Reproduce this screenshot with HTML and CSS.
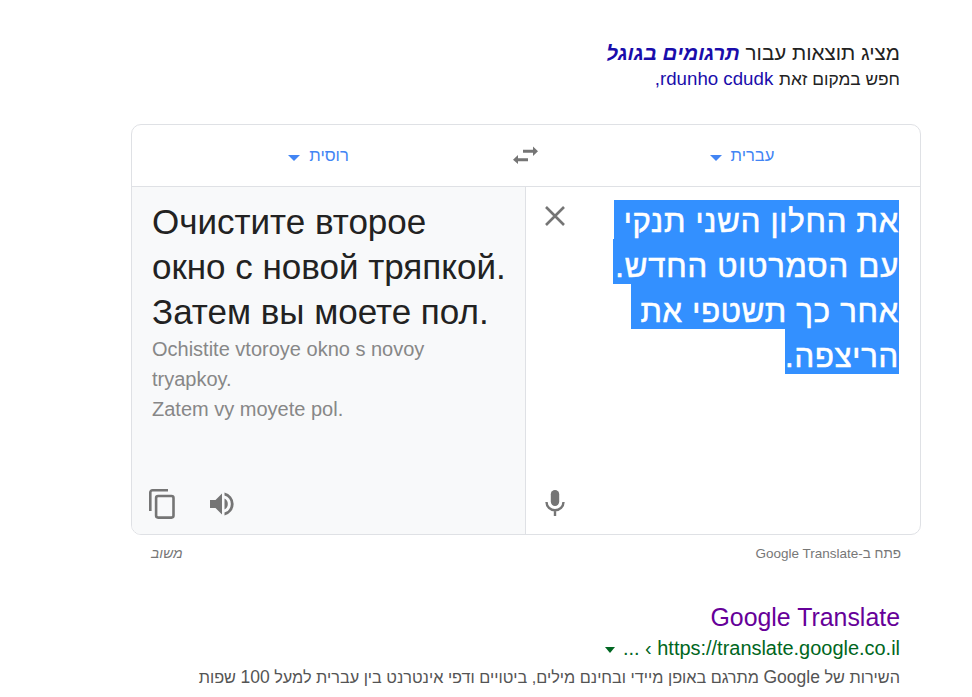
FILE: index.html
```html
<!DOCTYPE html>
<html lang="he" dir="rtl">
<head>
  <meta charset="UTF-8" />
  <meta name="viewport" content="width=device-width, initial-scale=1.0" />
  <title>תרגומים בגוגל</title>
  <link rel="stylesheet" href="styles.css">
</head>
<body>
  <div class="spelling">
    <div class="showing">מציג תוצאות עבור <a href="#" class="fixed">תרגומים בגוגל</a></div>
    <div class="instead">חפש במקום זאת <a href="#">rdunho cdudk,</a></div>
  </div>

  <div class="translator">
    <div class="languages">
      <a href="#" class="lang">עברית <span class="caret"></span></a>
      <svg class="swap" viewBox="0 0 25 18">
        <path d="M10 3.800h10V.500L25 5.300l-5 4.800V6.800H10z M15 12.200H5V8.900L0 13.700l5 4.300V15.200H15z" />
      </svg>
      <a href="#" class="lang">רוסית <span class="caret"></span></a>
    </div>
    <div class="panels">
      <div class="panel source">
        <svg class="clear" viewBox="0 0 20 20"><path d="M1 1L19 19M19 1L1 19" /></svg>
        <div class="source-text">
          <div class="line first">את החלון השני תנקי </div>
          <div class="line second">עם הסמרטוט החדש.</div>
          <div class="line">אחר כך תשטפי את </div>
          <div class="line">הריצפה.</div>
        </div>
        <svg class="mic" viewBox="0 0 20 26">
          <rect x="5.800" y="0" width="8.400" height="16" rx="4.200" />
          <path d="M1.500 12a8.500 8.300 0 0 0 17 0M10 20v6" />
        </svg>
      </div>
      <div class="panel target" dir="ltr">
        <div class="translation">Очистите второе<br>окно с новой тряпкой.<br>Затем вы моете пол.</div>
        <div class="translit">Ochistite vtoroye okno s novoy<br>tryapkoy.<br>Zatem vy moyete pol.</div>
        <div class="tools">
          <svg class="copy" viewBox="0 0 26 30">
            <path d="M1.3 22V3.5a2.2 2.2 0 0 1 2.2-2.2H19" />
            <rect x="7.1" y="7" width="17.4" height="21.6" rx="2" />
          </svg>
          <svg class="speaker" viewBox="0 0 24 24">
            <path d="M0 8v8h5.5L12 22.5v-21L5.500 8z" />
            <path d="M14.500 6.500a6.200 6.200 0 0 1 0 11z" />
            <path d="M14.500 .5a11.800 11.800 0 0 1 0 23V20.600a9 9 0 0 0 0-17.200z" />
          </svg>
        </div>
      </div>
    </div>
  </div>
  <div class="under">
    <a href="#">פתח ב-Google Translate</a>
    <a href="#" class="feedback">משוב</a>
  </div>

  <div class="result">
    <h3><a href="#">Google Translate</a></h3>
    <div class="url"><span dir="ltr">... ‹ https://translate.google.co.il</span><span class="url-caret"></span></div>
    <p>השירות של <span class="latin">Google</span> מתרגם באופן מיידי ובחינם מילים, ביטויים ודפי אינטרנט בין עברית למעל <span class="latin">100</span> שפות</p>
  </div>
</body>
</html>
```
FILE: styles.css
```css
body {
  margin: 0;
  padding: 40px 51px 0 131px;
  height: 697px;
  box-sizing: border-box;
  overflow: hidden;
  background: #fff;
  color: #222;
  font-family: "Liberation Sans", Arial, sans-serif;
}

a {
  text-decoration: none;
}

.spelling {
  height: 84px;
  padding-right: 21px;
  white-space: nowrap;
}

.spelling a {
  color: #1a0dab;
}

.showing {
  height: 27px;
  font-size: 20.6px;
  line-height: 26px;
}

.fixed {
  font-weight: bold;
  font-style: italic;
}

.instead {
  font-size: 17.3px;
  line-height: 24px;
}

.instead a {
  margin-right: 1px;
  font-size: 18.7px;
}

/* translate box */
.translator {
  width: 790px;
  height: 411px;
  box-sizing: border-box;
  border: 1px solid #dfe1e5;
  border-radius: 10px;
  overflow: hidden;
}

.languages {
  height: 61px;
  display: grid;
  grid-template-columns: 356px 59px 373px;
  align-items: center;
  justify-items: center;
  border-bottom: 1px solid #dfe1e5;
}

.lang {
  display: flex;
  align-items: center;
  gap: 9px;
  color: #4285f4;
  font-size: 16.6px;
}

.caret {
  border: 6px solid transparent;
  border-top-color: #4285f4;
  border-bottom: 0;
  margin-top: 5px;
}

.swap {
  width: 25px;
  height: 18px;
  margin: 0 18px 1px 0;
  fill: #757575;
}

.panels {
  display: flex;
  height: 348px;
}

.panel {
  box-sizing: border-box;
  height: 348px;
}

.source {
  width: 394px;
  padding: 13px 21px 0 19px;
  display: grid;
  grid-template-columns: 1fr 20px;
  grid-template-rows: 290px 26px;
}

.clear {
  grid-column: 2;
  grid-row: 1;
  width: 20px;
  height: 20px;
  margin-top: 6px;
  stroke: #757575;
  stroke-width: 2.6;
}

.source-text {
  grid-column: 1;
  grid-row: 1;
  color: #fff;
  font-size: 31px;
  letter-spacing: 0.8px;
  -webkit-text-stroke: 0.6px #fff;
}

/* selected text */
.line {
  width: fit-content;
  height: 45px;
  line-height: 56px;
  white-space: pre;
  background: #3390ff;
}

.first {
  height: 39px;
  line-height: 44px;
}

.second {
  padding-left: 2px;
}

.mic {
  grid-column: 2;
  grid-row: 2;
  width: 20px;
  height: 26px;
  fill: #757575;
}

.mic path {
  fill: none;
  stroke: #757575;
  stroke-width: 2.4;
}

.target {
  width: 394px;
  padding: 12px 0 0 20px;
  background: #f8f9fa;
  border-right: 1px solid #dfe1e5;
  white-space: nowrap;
}

.translation {
  color: #222;
  font-size: 35px;
  line-height: 45px;
}

.translit {
  color: #878787;
  font-size: 20px;
  line-height: 30px;
}

.tools {
  display: flex;
  align-items: center;
  gap: 35px;
  margin: 65px 0 0 -3px;
}

.copy {
  width: 26px;
  height: 30px;
  fill: none;
  stroke: #757575;
  stroke-width: 2.6;
}

.speaker {
  width: 24px;
  height: 24px;
  fill: #757575;
}

.under {
  display: flex;
  justify-content: space-between;
  align-items: baseline;
  height: 18px;
  padding: 9px 20px 0;
  font-size: 13.5px;
  line-height: 18px;
}

.under a {
  color: #777;
}

.under .feedback {
  font-size: 14px;
  font-style: italic;
}

/* search result */
.result {
  padding: 40px 21px 0 0;
  white-space: nowrap;
}

.result h3 {
  margin: 0;
  font-size: 24.9px;
  font-weight: normal;
  line-height: 30px;
}

.result h3 a {
  color: #609;
}

.url {
  display: flex;
  align-items: center;
  gap: 8px;
  color: #006621;
  font-size: 19.95px;
  line-height: 32px;
}

.url-caret {
  border: 5px solid transparent;
  border-top: 6px solid #006621;
  border-bottom: 0;
  margin-top: 4px;
}

.result p {
  margin: 0;
  color: #545454;
  font-size: 16.28px;
  line-height: 26px;
}

.latin {
  font-size: 17.5px;
}
```
